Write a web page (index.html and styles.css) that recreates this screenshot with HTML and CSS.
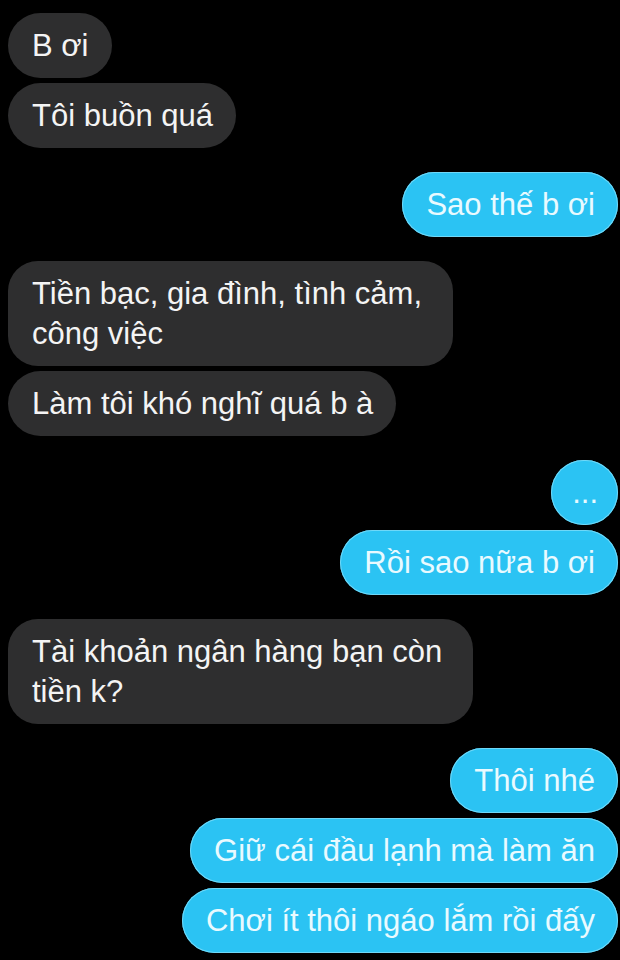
FILE: index.html
```html
<!DOCTYPE html>
<html lang="vi">
<head>
<meta charset="utf-8">
<link rel="stylesheet" href="styles.css">
</head>
<body>
<main class="chat">
  <section class="group in">
    <div class="bubble">B ơi</div>
    <div class="bubble">Tôi buồn quá</div>
  </section>
  <section class="group out">
    <div class="bubble">Sao thế b ơi</div>
  </section>
  <section class="group in">
    <div class="bubble multi">Tiền bạc, gia đình, tình cảm,<br>công việc</div>
    <div class="bubble">Làm tôi khó nghĩ quá b à</div>
  </section>
  <section class="group out">
    <div class="bubble dots">...</div>
    <div class="bubble">Rồi sao nữa b ơi</div>
  </section>
  <section class="group in">
    <div class="bubble multi">Tài khoản ngân hàng bạn còn<br>tiền k?</div>
  </section>
  <section class="group out">
    <div class="bubble">Thôi nhé</div>
    <div class="bubble">Giữ cái đầu lạnh mà làm ăn</div>
    <div class="bubble">Chơi ít thôi ngáo lắm rồi đấy</div>
  </section>
</main>
</body>
</html>
```

FILE: styles.css
```css
html, body {
  margin: 0;
  padding: 0;
  background: #000;
}
body {
  width: 620px;
  height: 960px;
  overflow: hidden;
  font-family: "Liberation Sans", Arial, sans-serif;
  font-size: 31px;
  line-height: 40px;
}
.chat {
  display: flex;
  flex-direction: column;
  gap: 24px;
  padding: 13px 2px 0 8px;
}
.group {
  display: flex;
  flex-direction: column;
  gap: 5px;
}
.group.in {
  align-items: flex-start;
}
.group.out {
  align-items: flex-end;
}
.bubble {
  white-space: nowrap;
  padding: 13px 23px 12px 24px;
  border-radius: 33px;
}
.bubble.multi {
  padding-right: 31px;
  border-radius: 30px;
}
.in .bubble {
  background: #2e2e2f;
  color: #f4f4f4;
}
.out .bubble {
  background: #2bc3f3;
  color: #e9faff;
  box-shadow: inset 0 0 0 1px #6fd8f8;
}
.bubble.dots {
  padding: 13px 20px 12px 21px;
}
```
